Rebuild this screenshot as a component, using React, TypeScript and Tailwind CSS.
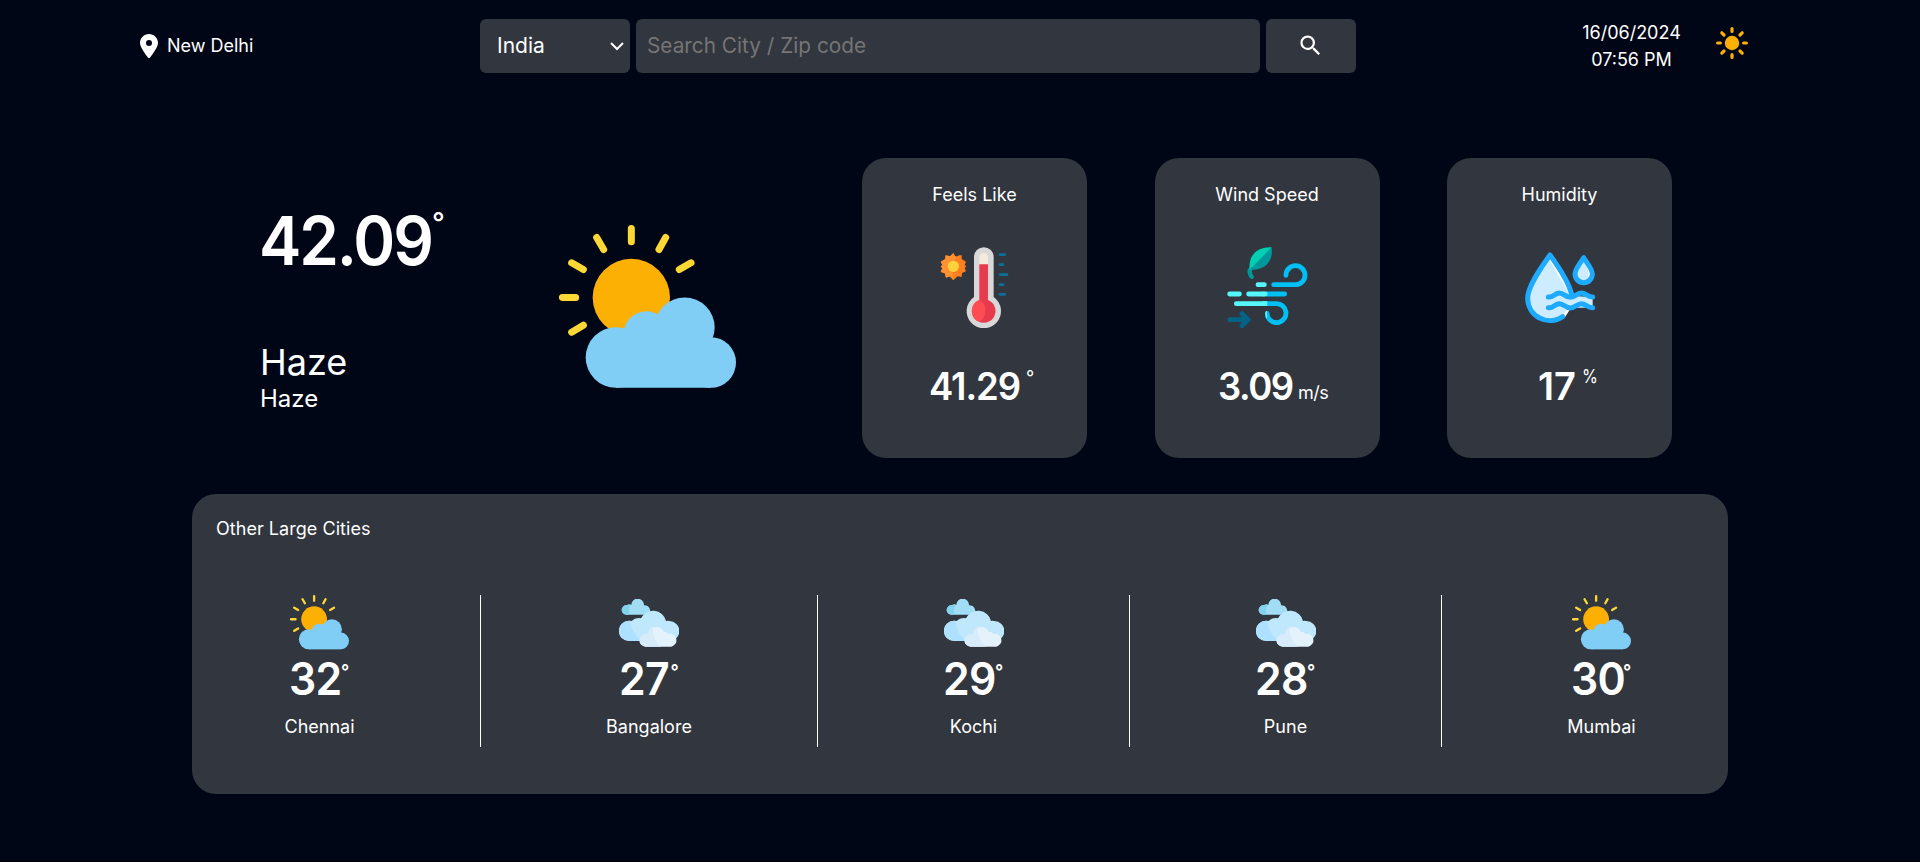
import React from "react";
import { FaLocationDot } from "react-icons/fa6";
import { MdSearch } from "react-icons/md";

function SunIcon() {
  return (
    <svg viewBox="0 0 32 32" className="h-8 w-8">
      <circle cx="16" cy="16" r="7.2" fill="#fbb003" />
      <g stroke="#fbb003" strokeWidth="3.2" strokeLinecap="round">
        <path d="M16 1.600v2.800M16 27.600v2.800M1.600 16h2.800M27.600 16h2.800M5.800 5.800l2.200 2.200M24 24l2.200 2.200M26.200 5.800l-2.200 2.200M8 24l-2.200 2.200" />
      </g>
    </svg>
  );
}

function PartlyCloudy({ className }: { className: string }) {
  return (
    <svg viewBox="57 45 531 488" className={className}>
      <circle cx="274" cy="262" r="116" fill="#fbb003" />
      <g stroke="#fdd835" strokeWidth="21" strokeLinecap="round">
        <path d="M274 55V95M170 82l21 36M377 82l-20 36M95 158l35 20M453 158l-35 20M67 262h40M95 366l35-21" />
      </g>
      <g fill="#80cdf5">
        <circle cx="228" cy="442" r="91" />
        <circle cx="319" cy="371" r="68" />
        <circle cx="434" cy="352" r="90" />
        <circle cx="512" cy="457" r="76" />
        <path d="M228 400H512V533H228Z" />
      </g>
    </svg>
  );
}

function Clouds({ className }: { className: string }) {
  return (
    <svg viewBox="117 57 180 144" className={className}>
      <path fill="#a1def6" d="M139 76Q146 73 154 74A19 19 0 0 1 192 76Q208 76 211 92V104H139A14 14 0 0 1 139 76Z" />
      <path fill="#81d4ec" d="M139 76Q145 73 151 73Q146 84 147 104H139A14 14 0 0 1 139 76Z" />
      <path fill="#bfe8fd" d="M147 122Q151 122 155 123Q165 112 183 115A40 40 0 0 1 258 123Q263 122 268 123A30 30 0 0 1 268 183H147A30 30 0 0 1 147 122Z" />
      <path fill="#aee1ff" d="M147 122H151C153 146 166 170 186 183H147A30 30 0 0 1 147 122Z" />
      <path fill="#e3f2fb" d="M197 163Q201 162 204 163A25 25 0 0 1 251 155Q262 155 266 162A19 19 0 0 1 274 200H197A18 18 0 0 1 197 163Z" />
      <path fill="#d8ebfa" d="M197 163Q201 162 204 163Q204 146 220 139C215 163 224 186 244 200H197A18 18 0 0 1 197 163Z" />
    </svg>
  );
}

function Thermometer() {
  return (
    <svg viewBox="252 290 243 243" className="h-[81px] w-[81px]">
      <path fill="#fe7f1f" d="M310 308l7 11 11-4 1 0 6 0 0 11 13 8-4 10 5 4-5 5 4 10-12 5-1 12-12-2-13 12-12-12-12 2-1-12-12-5 4-10-5-5 5-4-4-10 12-8 1-11 12 4z" />
      <path fill="#fe9132" d="M310 308v8l9 2q-14 24-14 36 0 14 5 22v12l-8-10-14 4-2-12-14-5 5-11-5-5 5-5-5-10 14-7 2-12 14 3z" />
      <circle cx="310" cy="348" r="17" fill="#fed23c" />
      <path fill="#d8d8d8" d="M372 320a29.500 29.500 0 0 1 59 0V440A51.500 51.500 0 1 1 372 440Z" />
      <path fill="#f4ebdc" d="M388 321a13 13 0 0 1 26 0V344H388Z" />
      <path fill="#e73a4c" d="M388 342H414V449A35.500 35.500 0 1 1 388 449Z" />
      <path fill="#fe4d52" d="M388 449C411 457 413 500 388 515A35.500 35.500 0 0 1 388 449Z" />
      <g stroke="#0b7199" strokeWidth="8" strokeLinecap="round">
        <path d="M450 313h14M450 343h9M450 373h21M450 403h9M450 432h14" />
      </g>
    </svg>
  );
}

function Wind() {
  return (
    <svg viewBox="260 290 243 243" className="h-[81px] w-[81px]" fill="none">
      <path fill="#00979b" d="M394 291C399 328 381 357 336 359Q332 366 341 379Q341 386 333 387Q322 378 321 361Q322 354 327 352L360 320Z" />
      <path fill="#00cfb4" d="M394 291L328 358Q323 306 370 293Q382 290 394 291Z" />
      <g strokeWidth="14.5" strokeLinecap="round">
        <path stroke="#00bff5" d="M400 403H465A28.500 28.500 0 1 0 437 375M380 431H433M380 460H408A28.500 28.500 0 1 1 382 499" />
        <path stroke="#55f7fc" d="M353 403H372M268 431H297M325 431H373M288 460H373" />
        <path stroke="#036386" d="M268 508H320M305 490L323 508L305 526" />
      </g>
      <path fill="#55f7fc" d="M365 424H381V438H365ZM365 453H381V467H365ZM381 481Q375 481 374 488Q374 499 381 508Z" />
      <path fill="#00bff5" d="M381 481Q388 483 388 490V505L381 506Z" />
    </svg>
  );
}

function Drops() {
  return (
    <svg viewBox="267 290 243 243" className="h-[81px] w-[81px]" fill="none">
      <path fill="#ceecff" d="M360 314C340 343 293 405 293 444A67 67 0 0 0 402 496L424 472H488V441L425 436C415 400 380 343 360 314Z" />
      <path fill="#fff" d="M357 326Q390 385 416 425L423 437V425L362 317ZM398 496L412 476L422 474L404 502Z" />
      <path fill="#ceecff" d="M461 323C452 337 435 356 435 371A26 26 0 0 0 487 371C487 356 470 337 461 323Z" />
      <path fill="#fff" d="M461 330Q478 356 474 380Q488 375 482 358Z" />
      <g stroke="#1eaafe" strokeWidth="15" strokeLinecap="round" strokeLinejoin="round">
        <path d="M398 499A67 67 0 0 1 293 444C293 405 340 343 360 314C381 343 416 395 425 432" />
        <path d="M461 322C452 337 435 356 435 371A26 26 0 0 0 487 371C487 356 470 337 461 322Z" />
        <path d="M355 440C371 442 374 428 388 428S406 441 421 441 440 428 454 428 472 441 488 440M355 472C371 474 374 460 388 460S406 473 421 473 440 460 454 460 472 473 488 472" />
      </g>
    </svg>
  );
}

function StatCard({ title, icon, children }: { title: string; icon: React.ReactNode; children: React.ReactNode }) {
  return (
    <div className="flex h-[300px] w-[225px] flex-col items-center rounded-3xl bg-[#32363e] pt-[23px]">
      <div className="leading-[27px]">{title}</div>
      <div className="mt-[39px]">{icon}</div>
      <div className="mt-[35px] flex w-full">{children}</div>
    </div>
  );
}

const cities = [
  { name: "Chennai", temp: 32, sunny: true, box: "w-[289px] pr-[33px] border-r" },
  { name: "Bangalore", temp: 27, sunny: false, box: "w-[337px] border-r" },
  { name: "Kochi", temp: 29, sunny: false, box: "w-[312px] border-r" },
  { name: "Pune", temp: 28, sunny: false, box: "w-[312px] border-r" },
  { name: "Mumbai", temp: 30, sunny: true, box: "w-[286px] pl-[33px]" },
];

export default function App() {
  return (
    <div className="h-[862px] overflow-hidden border-b border-black bg-[#010616] font-['Inter',sans-serif] text-lg text-white">
      <header className="flex h-[92px] items-start pl-[140px] pt-[19px]">
        <div className="flex h-[54px] w-[340px] items-center gap-[9px]">
          <FaLocationDot className="h-6 w-[18px]" />
          <span>New Delhi</span>
        </div>
        <div className="flex h-[54px] gap-1.5">
          <div className="flex w-[150px] items-center justify-between rounded-md bg-[#32363e] pl-[17px] pr-[5px] text-[21px]">
            <span>India</span>
            <svg viewBox="0 0 16 10" className="h-2.5 w-4" fill="none" stroke="white" strokeWidth="2">
              <path d="M2 2l6 6 6-6" />
            </svg>
          </div>
          <input
            className="w-[624px] rounded-md bg-[#32363e] px-[11px] text-[20.8px] outline-none placeholder:text-[#757575]"
            placeholder="Search City / Zip code"
          />
          <button className="flex w-[90px] items-center justify-center rounded-md bg-[#32363e] pr-0.5 pb-px">
            <MdSearch size={27} />
          </button>
        </div>
        <div className="ml-[226px] w-[99px] whitespace-nowrap text-center leading-[27px]">
          <div>16/06/2024</div>
          <div>07:56 PM</div>
        </div>
        <div className="ml-[35px] mt-2">
          <SunIcon />
        </div>
      </header>

      <main className="mx-auto w-[1536px]">
        <section className="flex h-[402px] pt-[66px]">
          <div className="w-[299px] pl-[67px]">
            <div className="mt-[42px] flex h-[82px] items-start">
              <span className="w-[173px] origin-left scale-x-95 text-[67px] font-semibold leading-[82px] tracking-[-2.2px]">
                42.09
              </span>
              <span className="mt-1.5 text-[28px] font-medium leading-[34px]">°</span>
            </div>
            <div className="mt-[58px] pl-px text-4xl leading-[44px]">Haze</div>
            <div className="pl-px text-2xl leading-[29px]">Haze</div>
          </div>
          <PartlyCloudy className="ml-[68px] mt-[67px] h-[163px] w-[177px]" />
          <div className="ml-[126px] flex gap-[67.5px]">
            <StatCard title="Feels Like" icon={<Thermometer />}>
              <span className="ml-[67px] w-[97px] origin-left scale-x-[0.96] text-[38px] font-semibold leading-[46px] tracking-[-1.1px]">
                41.29
              </span>
              <span className="mt-px">°</span>
            </StatCard>
            <StatCard title="Wind Speed" icon={<Wind />}>
              <span className="ml-[63.5px] w-20 origin-left scale-x-[0.96] text-[38px] font-semibold leading-[46px] tracking-[-1.5px]">
                3.09
              </span>
              <span className="mt-4 tracking-[-0.5px]">m/s</span>
            </StatCard>
            <StatCard title="Humidity" icon={<Drops />}>
              <span className="ml-[91px] w-11 text-[38px] font-semibold leading-[46px]">17</span>
              <span className="origin-left scale-x-90">%</span>
            </StatCard>
          </div>
        </section>

        <section className="h-[300px] rounded-3xl bg-[#32363e] pt-[21px]">
          <div className="pl-6 leading-[27px] tracking-[0.04px]">Other Large Cities</div>
          <div className="mt-[53px] flex">
            {cities.map((city) => (
              <div key={city.name} className={`flex h-[152px] flex-col items-center border-white ${city.box}`}>
                <div className="flex h-[60px] items-start">
                  {city.sunny ? (
                    <PartlyCloudy className="mr-px h-[54.500px] w-[59px]" />
                  ) : (
                    <Clouds className="mt-1 h-12 w-[60px]" />
                  )}
                </div>
                <div className="flex h-[54px] items-start">
                  <span className="w-[52px] origin-left scale-x-95 text-[45px] font-semibold leading-[48px] tracking-[-0.7px]">
                    {city.temp}
                  </span>
                  <span className="mt-[3px] w-[9px] font-semibold leading-[27px]">°</span>
                </div>
                <div className="mt-1 leading-[27px]">{city.name}</div>
              </div>
            ))}
          </div>
        </section>
      </main>
    </div>
  );
}
